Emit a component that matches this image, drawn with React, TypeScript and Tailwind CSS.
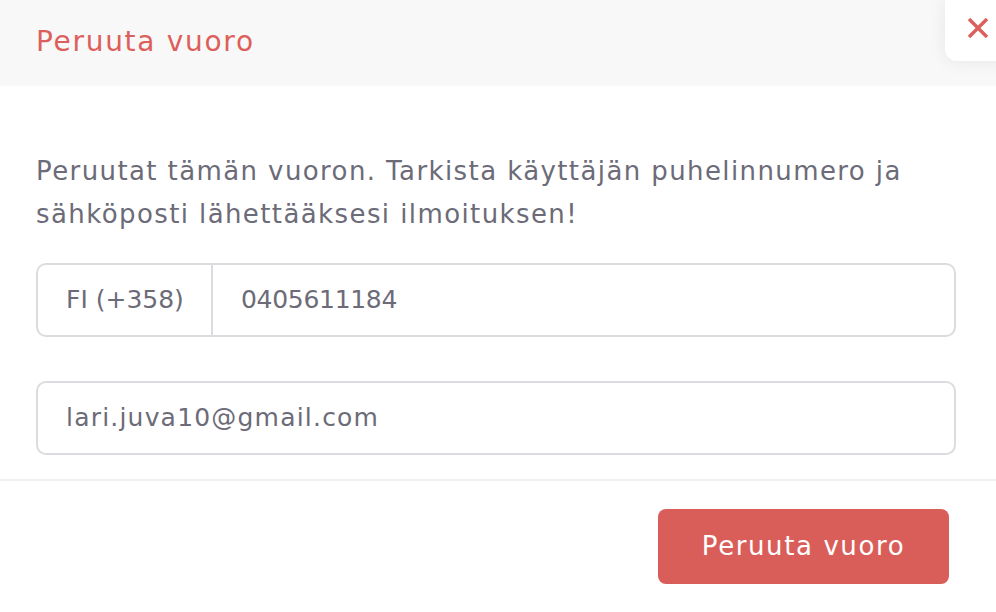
import React from "react";

export default function App() {
  return (
    <div
      className="relative w-[996px] h-[612px] bg-white overflow-hidden"
      style={{ fontFamily: '"DejaVu Sans", "Noto Sans", sans-serif' }}
    >
      <div className="h-[86px] bg-[#f8f8f8] flex items-center pl-[36px]">
        <h2 className="text-[28px] text-[#dd5f5b] leading-none tracking-[1.7px] -mt-[2px]">
          Peruuta vuoro
        </h2>
      </div>

      <button className="absolute top-0 right-[-14px] w-[65px] h-[61px] bg-white rounded-bl-[12px] shadow-[0_0_18px_rgba(0,0,0,0.08)] flex items-center justify-center">
        <svg width="22" height="22" viewBox="0 0 22 22" className="-mt-[6px]">
          <path d="M2 2 L20 20 M20 2 L2 20" stroke="#dd5f5b" strokeWidth="3.4" strokeLinecap="butt" />
        </svg>
      </button>

      <div className="px-[36px] pt-[64px]">
        <p className="text-[26px] leading-[43px] text-[#6c6b78] w-[920px] tracking-[1.4px]">
          Peruutat tämän vuoron. Tarkista käyttäjän puhelinnumero ja sähköposti lähettääksesi ilmoituksen!
        </p>

        <div className="mt-[27px] flex h-[74px] w-[920px] border-2 border-[#dcdce0] rounded-[10px] text-[25px] text-[#6c6b78]">
          <div className="w-[175px] flex items-center pl-[28px] border-r-2 border-[#dcdce0]">
            FI (+358)
          </div>
          <div className="flex items-center pl-[28px] -tracking-[0.3px]">0405611184</div>
        </div>

        <div className="mt-[44px] flex items-center h-[74px] w-[920px] border-2 border-[#dcdce0] rounded-[10px] pl-[28px] text-[25px] text-[#6c6b78] tracking-[1.2px]">
          lari.juva10@gmail.com
        </div>
      </div>

      <div className="mt-[24px] border-t-2 border-[#f1f1f1]" />

      <div className="flex justify-end pr-[47px] pt-[28px]">
        <button className="w-[291px] h-[75px] bg-[#d95e5a] rounded-[8px] text-white text-[26px] tracking-[1.6px] flex items-center justify-center">
          Peruuta vuoro
        </button>
      </div>
    </div>
  );
}
